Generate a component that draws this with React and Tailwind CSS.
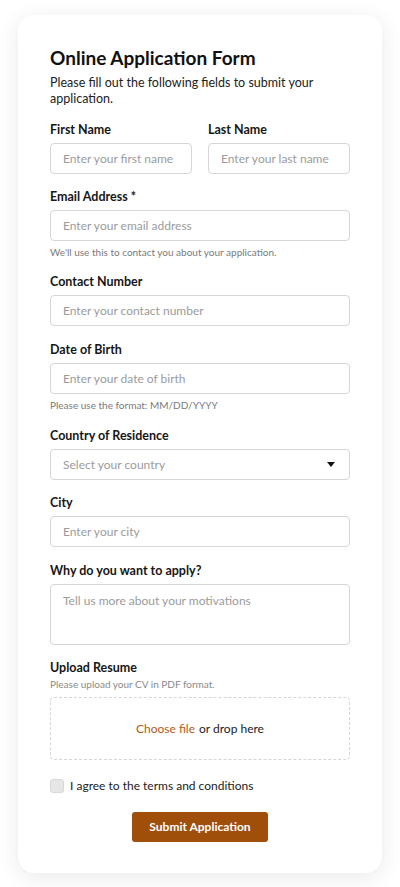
import React from 'react';

const font = { fontFamily: 'Lato, "Open Sans", sans-serif' };

const Label = ({ children, className = 'mb-[3px]' }) => (
  <label className={`block pt-[1px] text-[12.5px] leading-5 font-bold text-[#161616] ${className}`}>{children}</label>
);

const Input = ({ placeholder }) => (
  <input
    type="text"
    placeholder={placeholder}
    className="block w-full h-[31px] px-3 text-[12px] text-[#222] bg-white border border-[#d6d6d6] rounded-[4px] outline-none placeholder:text-[#9b9b9b]"
  />
);

const Helper = ({ children, className = '' }) => (
  <p className={`text-[10px] leading-4 text-[#7a7a7a] ${className}`}>{children}</p>
);

export default function App() {
  return (
    <div className="min-h-screen bg-white pt-[15px] pb-[15px] px-[18px]" style={font}>
      <form className="bg-white rounded-[16px] shadow-[0_4px_22px_rgba(0,0,0,0.09)] px-8 pt-[29px] pb-[31px]">
        <h1 className="text-[19px] leading-7 font-bold text-[#111]">Online Application Form</h1>
        <p className="mt-[3px] text-[12.5px] leading-4 text-[#222]">
          Please fill out the following fields to submit your application.
        </p>

        <div className="mt-3 grid grid-cols-2 gap-4">
          <div>
            <Label>First Name</Label>
            <Input placeholder="Enter your first name" />
          </div>
          <div>
            <Label>Last Name</Label>
            <Input placeholder="Enter your last name" />
          </div>
        </div>

        <div className="mt-[12px]">
          <Label>Email Address *</Label>
          <Input placeholder="Enter your email address" />
          <Helper className="mt-[3px]">We'll use this to contact you about your application.</Helper>
        </div>

        <div className="mt-[11px]">
          <Label>Contact Number</Label>
          <Input placeholder="Enter your contact number" />
        </div>

        <div className="mt-[13px]">
          <Label>Date of Birth</Label>
          <Input placeholder="Enter your date of birth" />
          <Helper className="mt-[3px]">Please use the format: MM/DD/YYYY</Helper>
        </div>

        <div className="mt-[12px]">
          <Label>Country of Residence</Label>
          <div className="flex items-center justify-between h-[31px] px-3 bg-white border border-[#d6d6d6] rounded-[4px]">
            <span className="text-[12px] text-[#9b9b9b]">Select your country</span>
            <svg width="8" height="5" viewBox="0 0 8 5" className="mr-[2px]">
              <path d="M0 0h8L4 5z" fill="#111" />
            </svg>
          </div>
        </div>

        <div className="mt-[12px]">
          <Label>City</Label>
          <Input placeholder="Enter your city" />
        </div>

        <div className="mt-[13px]">
          <Label>Why do you want to apply?</Label>
          <textarea
            placeholder="Tell us more about your motivations"
            className="block w-full h-[61px] px-3 py-2 text-[12px] leading-4 text-[#222] border border-[#d6d6d6] rounded-[4px] outline-none resize-none placeholder:text-[#9b9b9b]"
          />
        </div>

        <div className="mt-[12px]">
          <Label className="mb-0">Upload Resume</Label>
          <p className="-mt-[1px] text-[10px] leading-[14px] text-[#8a8a8a]">Please upload your CV in PDF format.</p>
          <div className="mt-[6px] h-[63px] flex items-center justify-center border border-dashed border-[#d6d6d6] rounded-[4px] text-[12px] text-[#222]">
            <span className="text-[#b45a12] mr-1">Choose file</span> or drop here
          </div>
        </div>

        <div className="mt-[16px] flex items-center h-5">
          <span className="w-[14px] h-[14px] bg-[#e6e6e6] border border-[#d8d8d8] rounded-[3px]" />
          <span className="ml-[6px] text-[12px] text-[#222]">I agree to the terms and conditions</span>
        </div>

        <div className="mt-[16px] flex justify-center">
          <button type="button" className="w-[136px] h-[30px] bg-[#a04f0b] text-white text-[12px] font-bold rounded-[3px]">
            Submit Application
          </button>
        </div>
      </form>
    </div>
  );
}
